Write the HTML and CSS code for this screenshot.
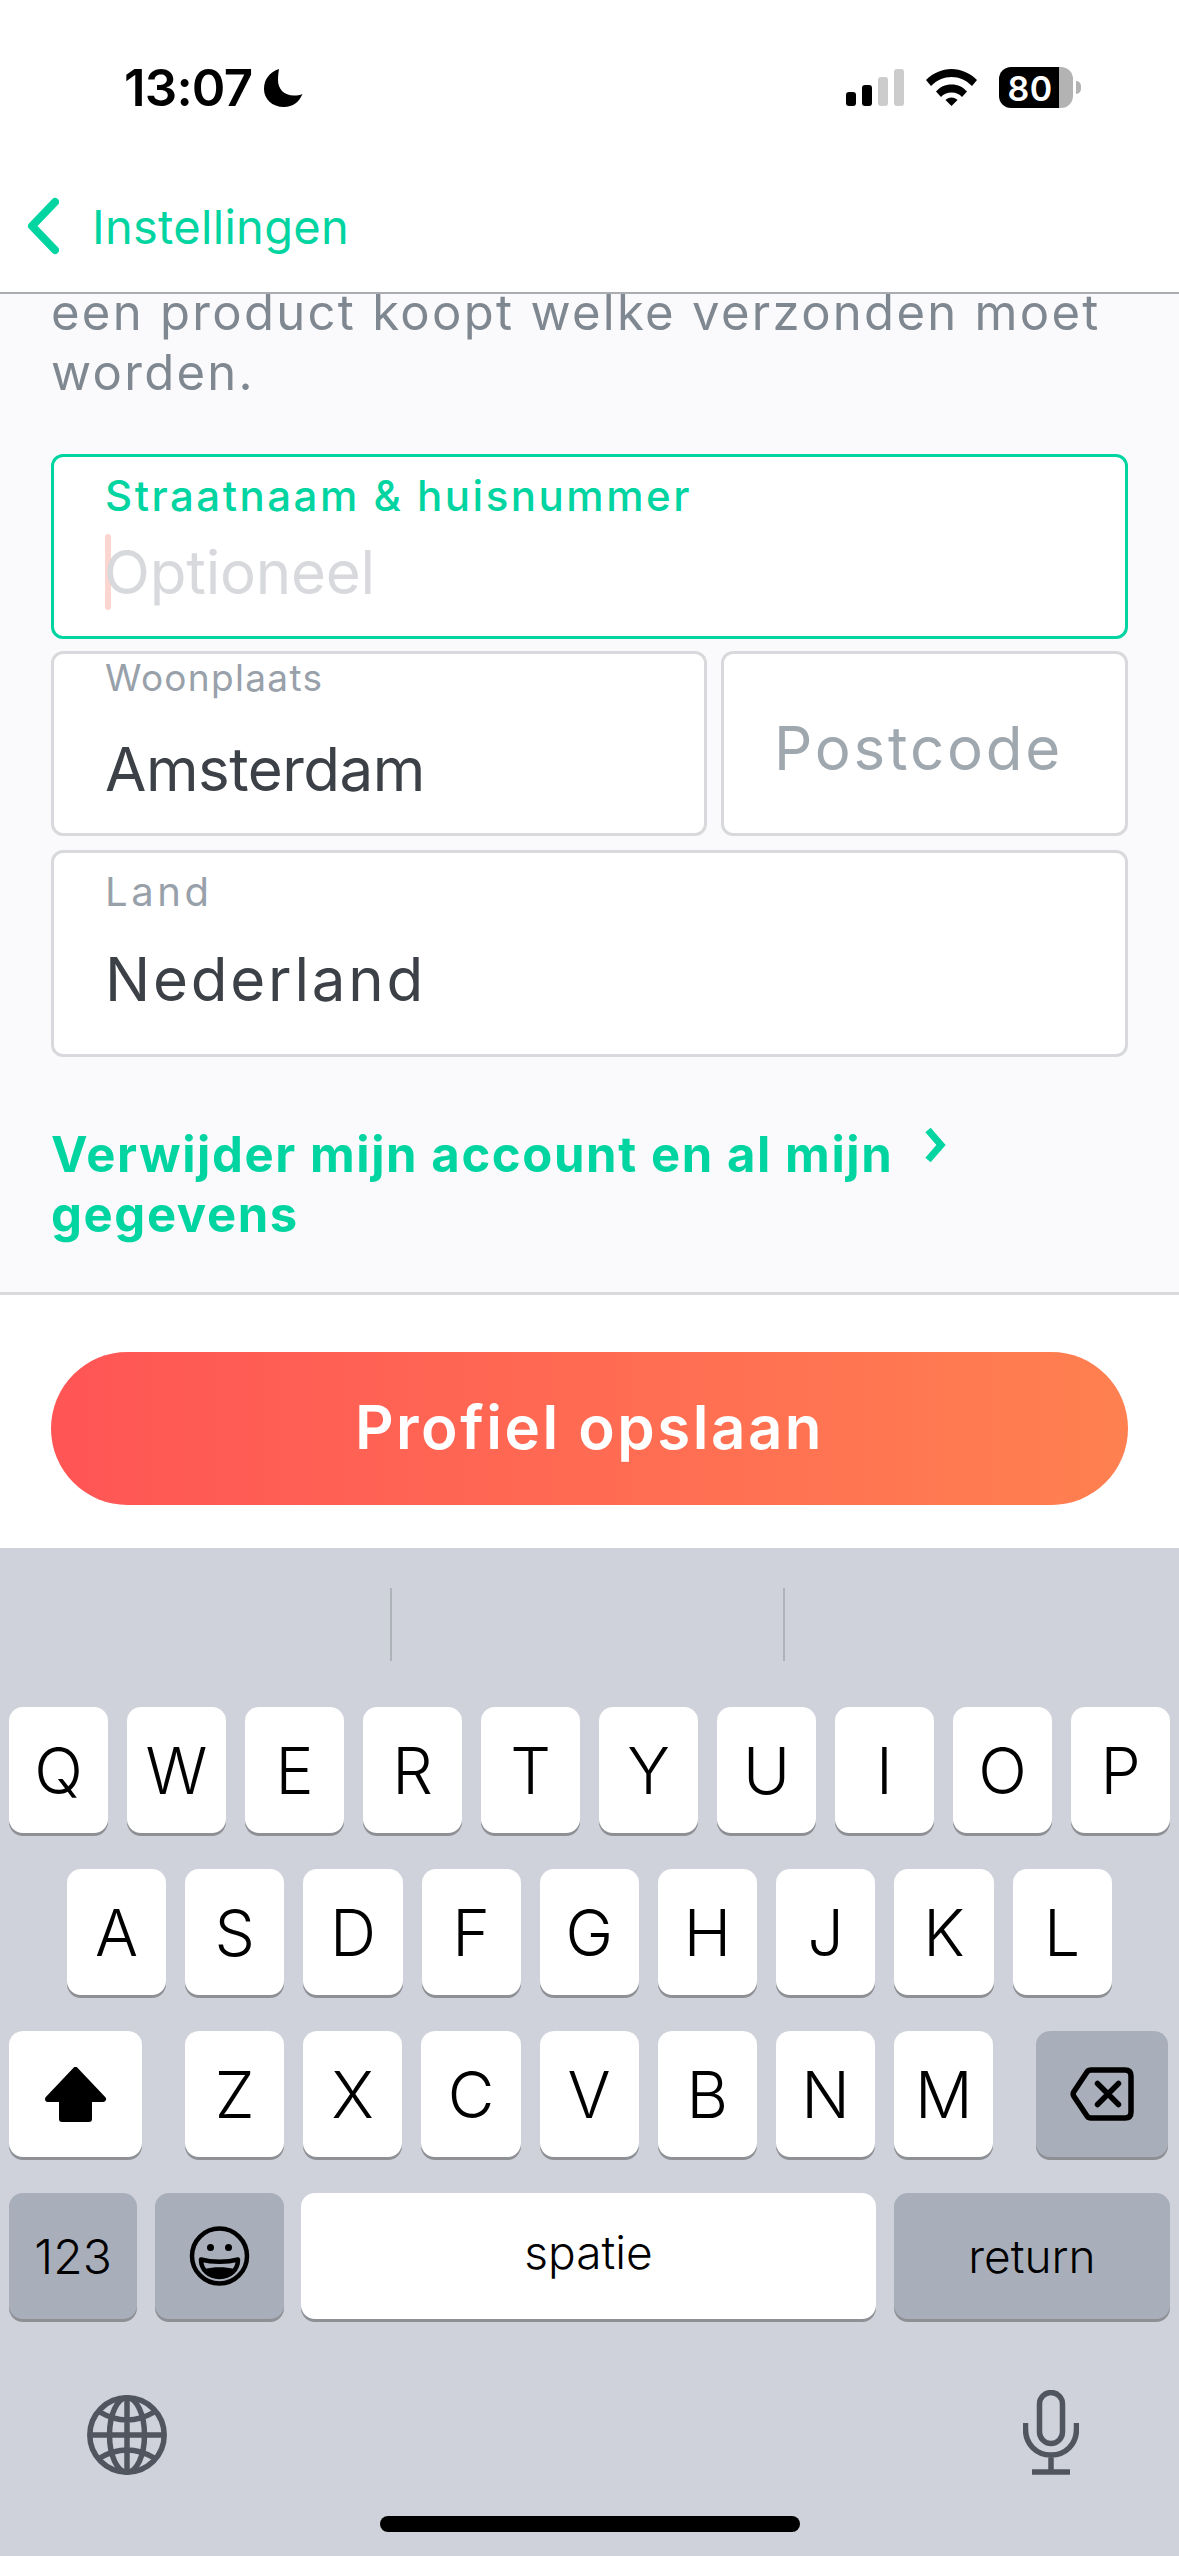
FILE: index.html
```html
<!DOCTYPE html>
<html lang="nl">
<head>
    <meta charset="UTF-8">
    <meta name="viewport" content="width=device-width, initial-scale=1.0">
    <title>Profiel</title>
    <link rel="stylesheet" href="styles.css">
</head>
<body>
    <div class="status-bar">
        <div class="status-left">
            <span class="time">13:07</span>
            <svg class="moon" viewBox="0 0 39 38"><path d="M15 0C6 3 0 10 0 20C0 30 8 38 20 38C29 38 35 33 38.500 25C36 26 33 26.500 30 26.500C20 26.500 14 20 14 11C14 7 14.500 3 15 0Z"/></svg>
        </div>
        <div class="status-right">
            <div class="signal">
                <span class="bar bar-1"></span>
                <span class="bar bar-2"></span>
                <span class="bar bar-3"></span>
                <span class="bar bar-4"></span>
            </div>
            <svg class="wifi" viewBox="0 0 51 37">
                <path d="M0 11C7 4 16 0 25.500 0C35 0 44 4 51 11L46 17C40 11 33 8 25.500 8C18 8 11 11 5 17Z"/>
                <path d="M10 22.500C14 18 19 15.500 25.500 15.500C32 15.500 37 18 41 22.500L36 28C33.500 25 30 23.500 25.500 23.500C21 23.500 17.500 25 15 28Z"/>
                <path d="M19.500 31C21 29.500 23 28.500 25.500 28.500C28 28.500 30 29.500 31.500 31L25.500 37Z"/>
            </svg>
            <div class="battery">
                <div class="battery-body"><span class="battery-level">80</span></div>
                <span class="battery-nub"></span>
            </div>
        </div>
    </div>

    <div class="nav-bar">
        <svg class="back-icon" viewBox="0 0 32 56"><path d="M28 4L5 28L28 52"/></svg>
        <span class="back-label">Instellingen</span>
    </div>

    <div class="content">
        <p class="intro">een product koopt welke verzonden moet worden.</p>

        <div class="field field-active">
            <span class="field-label">Straatnaam &amp; huisnummer</span>
            <div class="field-input">
                <span class="caret"></span>
                <span class="placeholder-light">Optioneel</span>
            </div>
        </div>

        <div class="field-row">
            <div class="field field-city">
                <span class="field-label label-city">Woonplaats</span>
                <span class="field-value value-city">Amsterdam</span>
            </div>
            <div class="field field-zip">
                <span class="placeholder-zip">Postcode</span>
            </div>
        </div>

        <div class="field field-country">
            <span class="field-label label-country">Land</span>
            <span class="field-value value-country">Nederland</span>
        </div>

        <div class="delete-link">
            <span class="delete-text">Verwijder mijn account en al mijn gegevens</span>
            <svg class="delete-icon" viewBox="0 0 22 36"><path d="M4 3L17 18L4 33"/></svg>
        </div>
    </div>

    <div class="save-bar">
        <div class="save-button">Profiel opslaan</div>
    </div>

    <div class="keyboard">
        <div class="suggestions">
            <span class="suggest-divider"></span>
            <span class="suggest-divider"></span>
        </div>
        <div class="key-row">
            <div class="key">Q</div><div class="key">W</div><div class="key">E</div><div class="key">R</div><div class="key">T</div>
            <div class="key">Y</div><div class="key">U</div><div class="key">I</div><div class="key">O</div><div class="key">P</div>
        </div>
        <div class="key-row key-row-middle">
            <div class="key">A</div><div class="key">S</div><div class="key">D</div><div class="key">F</div><div class="key">G</div>
            <div class="key">H</div><div class="key">J</div><div class="key">K</div><div class="key">L</div>
        </div>
        <div class="key-row key-row-shift">
            <div class="key key-shift">
                <svg class="shift-icon" viewBox="0 0 63 55"><path d="M31.500 3L59 32H45V52H18V32H4Z"/></svg>
            </div>
            <div class="key">Z</div><div class="key">X</div><div class="key">C</div><div class="key">V</div>
            <div class="key">B</div><div class="key">N</div><div class="key">M</div>
            <div class="key key-dark key-backspace">
                <svg class="backspace-icon" viewBox="0 0 64 54">
                    <path class="line" d="M21 3H55C59 3 61 5 61 9V45C61 49 59 51 55 51H21C19 51 18 50.500 17 49L4 29.500C3 28 3 26 4 24.500L17 5C18 3.500 19 3 21 3Z"/>
                    <path class="line" d="M27.500 16.500L48.500 37.500M48.500 16.500L27.500 37.500"/>
                </svg>
            </div>
        </div>
        <div class="key-row key-row-bottom">
            <div class="key key-dark key-num">123</div>
            <div class="key key-dark key-emoji">
                <svg class="emoji-icon" viewBox="0 0 61 60">
                    <circle class="emoji-line" cx="30.500" cy="30" r="27.500"/>
                    <circle cx="21.500" cy="21.500" r="3.500"/>
                    <circle cx="39.500" cy="21.500" r="3.500"/>
                    <path class="emoji-line" d="M12 33.500C23 36.500 38 36.500 49 33.500C49 44 41 51 30.500 51C20 51 12 44 12 33.500Z"/>
                    <path d="M16 43C24 40.500 37 40.500 45 43C43 47.500 37 50.500 30.500 50.500C24 50.500 18 47.500 16 43Z"/>
                </svg>
            </div>
            <div class="key key-space">spatie</div>
            <div class="key key-dark key-return">return</div>
        </div>
        <div class="keyboard-tools">
            <svg class="globe-icon" viewBox="0 0 80 80">
                <circle class="tool-line" cx="40" cy="40" r="37.200"/>
                <ellipse class="tool-line" cx="40" cy="40" rx="17.500" ry="37.200"/>
                <path class="tool-line" d="M40 2.800V77.200M2.800 40H77.200M12.700 17Q40 33 67.300 17M12.700 63Q40 47 67.300 63"/>
            </svg>
            <svg class="mic-icon" viewBox="0 0 56 85">
                <rect class="tool-line" x="16.500" y="2.500" width="23" height="51" rx="11.500"/>
                <path class="tool-line" d="M2.500 33V39C2.500 54 13 65 28 65C43 65 53.500 54 53.500 39V33M28 65V82M9 82H47"/>
            </svg>
        </div>
        <div class="home-indicator"></div>
    </div>
</body>
</html>
```

FILE: styles.css
```css
* {
    box-sizing: border-box;
}
html, body {
    margin: 0;
    padding: 0;
}
body {
    width: 1179px;
    height: 2556px;
    overflow: hidden;
    display: flex;
    flex-direction: column;
    background-color: #ffffff;
    font-family: Inter, "Liberation Sans", sans-serif;
}

/* status bar */
.status-bar {
    height: 156px;
    flex-shrink: 0;
    display: flex;
    justify-content: space-between;
    padding: 65px 98px 0 124px;
}
.status-left {
    display: flex;
    align-items: flex-start;
    gap: 12px;
}
.time {
    font-size: 51px;
    font-weight: 600;
    line-height: 46px;
    letter-spacing: -0.8px;
    color: #000000;
}
.moon {
    width: 39px;
    height: 38px;
    margin-top: 4px;
}
.status-right {
    display: flex;
    align-items: flex-start;
    padding-top: 2px;
}
.signal {
    display: flex;
    align-items: flex-end;
    gap: 6px;
    height: 37px;
    margin-top: 2px;
}
.bar {
    width: 10px;
    border-radius: 3px;
    background-color: #cccccc;
}
.bar-1 {
    height: 14px;
    background-color: #000000;
}
.bar-2 {
    height: 21px;
    background-color: #000000;
}
.bar-3 {
    height: 29px;
}
.bar-4 {
    height: 37px;
}
.wifi {
    width: 51px;
    height: 37px;
    margin: 2px 22px 0;
}
.battery {
    display: flex;
    align-items: center;
}
.battery-body {
    width: 74px;
    height: 41px;
    border-radius: 12px;
    background: linear-gradient(to right, #000000 60px, #b3b3b3 60px);
    overflow: hidden;
}
.battery-level {
    display: block;
    width: 60px;
    padding-left: 2px;
    text-align: center;
    font-size: 34px;
    font-weight: 600;
    line-height: 43px;
    letter-spacing: 0.5px;
    color: #ffffff;
}
.battery-nub {
    width: 5px;
    height: 13px;
    margin-left: 3px;
    border-radius: 0 6px 6px 0;
    background-color: #b3b3b3;
}

/* nav */
.nav-bar {
    height: 138px;
    flex-shrink: 0;
    display: flex;
    align-items: flex-start;
    padding: 41px 0 0 27px;
    border-bottom: 2px solid #a9adb1;
    background-color: #ffffff;
}
.back-icon {
    width: 32px;
    height: 58px;
    fill: none;
    stroke: #00d4a1;
    stroke-width: 8;
    stroke-linecap: round;
    stroke-linejoin: round;
}
.back-label {
    margin: 2px 0 0 33px;
    font-size: 47px;
    line-height: 56px;
    letter-spacing: 0.3px;
    color: #00d4a1;
}

/* content */
.content {
    height: 1001px;
    flex-shrink: 0;
    overflow: hidden;
    padding: 0 51px;
    border-bottom: 3px solid #d8d9dc;
    background-color: #fafafc;
}
.intro {
    margin: -11px 0 0 0;
    height: 171px;
    font-size: 49px;
    line-height: 60px;
    letter-spacing: 2.3px;
    color: #7f8790;
}
.field {
    display: flex;
    flex-direction: column;
    border: 3px solid #d8d9dc;
    border-radius: 12px;
    background-color: #ffffff;
}
.field-active {
    height: 185px;
    padding: 14px 0 0 51px;
    border-color: #00d4a1;
}
.field-label {
    font-size: 42px;
    font-weight: 500;
    line-height: 50px;
    letter-spacing: 2.500px;
    color: #00d4a1;
}
.field-input {
    display: flex;
    align-items: flex-start;
}
.caret {
    width: 6px;
    height: 76px;
    margin-top: 13px;
    border-radius: 3px;
    background-color: #fbd5d0;
}
.placeholder-light {
    margin: 18px 0 0 -7px;
    font-size: 60px;
    line-height: 66px;
    letter-spacing: -0.2px;
    color: #d8d9dd;
}
.field-row {
    display: flex;
    gap: 14px;
    margin-top: 12px;
}
.field-city {
    width: 656px;
    height: 185px;
    padding: 0 0 0 51px;
}
.label-city {
    margin-top: 2px;
    font-size: 37px;
    font-weight: 400;
    line-height: 44px;
    letter-spacing: 1.3px;
    color: #98a1aa;
}
.field-value {
    font-size: 60px;
    line-height: 70px;
    color: #3c4047;
}
.value-city {
    margin-top: 34px;
    letter-spacing: -0.5px;
}
.field-zip {
    flex: 1;
    height: 185px;
    padding: 59px 0 0 50px;
}
.placeholder-zip {
    font-size: 60px;
    line-height: 70px;
    letter-spacing: 2.8px;
    color: #9fa7af;
}
.field-country {
    height: 207px;
    margin-top: 14px;
    padding: 0 0 0 51px;
}
.label-country {
    margin-top: 16px;
    font-size: 40px;
    font-weight: 400;
    line-height: 46px;
    letter-spacing: 3.6px;
    color: #98a1aa;
}
.value-country {
    margin-top: 29px;
    letter-spacing: 2.800px;
}
.delete-link {
    display: flex;
    align-items: flex-start;
    margin: 68px 0 0 0;
}
.delete-text {
    width: 851px;
    font-size: 49px;
    font-weight: 700;
    line-height: 60px;
    letter-spacing: 1.6px;
    color: #00d4a1;
}
.delete-icon {
    width: 22px;
    height: 36px;
    margin: 2px 0 0 22px;
    fill: none;
    stroke: #00d4a1;
    stroke-width: 7;
}

/* save button */
.save-bar {
    height: 253px;
    flex-shrink: 0;
    padding: 57px 51px 0;
    background-color: #ffffff;
}
.save-button {
    height: 153px;
    border-radius: 77px;
    text-align: center;
    font-size: 60px;
    font-weight: 600;
    line-height: 150px;
    letter-spacing: 2.5px;
    color: #ffffff;
    background: linear-gradient(to right, #ff5555, #ff8050);
}

/* keyboard */
.keyboard {
    flex: 1;
    display: flex;
    flex-direction: column;
    background-color: #cfd2da;
}
.suggestions {
    height: 159px;
    display: flex;
    justify-content: center;
    gap: 391px;
    padding: 40px 4px 0 0;
}
.suggest-divider {
    width: 2px;
    height: 73px;
    background-color: #aeb2b9;
}
.key-row {
    display: flex;
    gap: 19px;
    height: 126px;
    margin-bottom: 36px;
    padding: 0 10px 0 9px;
}
.key-row-middle {
    padding: 0 67px;
}
.key-row-middle .key, .key-row-shift .key {
    width: 99.2px;
}
.key {
    width: 99px;
    flex-shrink: 0;
    display: flex;
    align-items: center;
    justify-content: center;
    border-radius: 14px;
    font-size: 64px;
    font-weight: 350;
    color: #000000;
    background-color: #ffffff;
    box-shadow: 0 3px 0 #8e9095;
}
.key-dark {
    background-color: #a9afba;
}
.key-row-shift .key-shift {
    width: 133px;
    margin-right: 24px;
}
.key-row-shift .key-backspace {
    width: 132px;
    margin-left: 24px;
}
.shift-icon {
    width: 63px;
    height: 55px;
    stroke: #000000;
    stroke-width: 6;
    stroke-linejoin: round;
}
.backspace-icon {
    width: 64px;
    height: 54px;
}
.line {
    fill: none;
    stroke: #000000;
    stroke-width: 5.500;
    stroke-linecap: round;
    stroke-linejoin: round;
}
.key-row-bottom {
    margin-bottom: 0;
}
.key-num {
    width: 128px;
    font-size: 48px;
    font-weight: 350;
}
.key-emoji {
    width: 129px;
    margin-left: -1px;
}
.emoji-icon {
    width: 61px;
    height: 60px;
}
.emoji-line {
    fill: none;
    stroke: #000000;
    stroke-width: 4.500;
    stroke-linejoin: round;
}
.key-space {
    width: 575px;
    margin-left: -2px;
    padding-bottom: 8px;
    font-size: 46px;
    font-weight: 350;
}
.key-return {
    width: 276px;
    margin-left: -1px;
    font-size: 46px;
    font-weight: 350;
}
.keyboard-tools {
    display: flex;
    justify-content: space-between;
    align-items: flex-end;
    height: 156px;
    padding: 0 100px 0 87px;
}
.globe-icon {
    width: 80px;
    height: 80px;
}
.mic-icon {
    width: 56px;
    height: 85px;
}
.tool-line {
    fill: none;
    stroke: #50555f;
    stroke-width: 5.500;
}
.home-indicator {
    width: 420px;
    height: 16px;
    margin: 41px auto 0;
    border-radius: 8px;
    background-color: #000000;
}
```
